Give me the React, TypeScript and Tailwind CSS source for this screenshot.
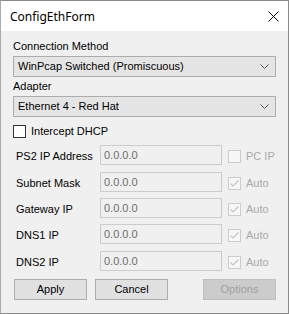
import React from "react";

const font = { fontFamily: '"Liberation Sans", Arial, sans-serif' };

function Combo({ text }: { text: string }) {
  return (
    <div className="h-[21px] w-[263px] border border-[#adadad] bg-[#e5e5e5] flex items-center justify-between pl-[4px] pr-[5px] text-[11px] leading-[13px] text-black">
      <span>{text}</span>
      <svg width="9" height="5" viewBox="0 0 9 5" className="mr-[1px]">
        <path d="M0.5 0.5 L4.5 4.5 L8.5 0.5" fill="none" stroke="#505050" strokeWidth="1" />
      </svg>
    </div>
  );
}

function DisabledCheck({ checked, label }: { checked: boolean; label: string }) {
  return (
    <div className="flex items-center">
      <div className="w-[13px] h-[13px] border border-[#cccccc] bg-[#f7f7f7] flex items-center justify-center">
        {checked && (
          <svg width="11" height="11" viewBox="0 0 11 11">
            <path d="M1.5 5.5 L4 8 L9.5 2.5" fill="none" stroke="#c4c4c4" strokeWidth="1.1" />
          </svg>
        )}
      </div>
      <span className="ml-[5px] text-[#a8a8a8]">{label}</span>
    </div>
  );
}

function Row({ label, check, checked, className }: { label: string; check: string; checked: boolean; className?: string }) {
  return (
    <div className={"flex items-center h-[20px] " + (className || "")}>
      <div className="w-[87px] pl-[3px] pt-[2px]">{label}</div>
      <div className="w-[122px] h-[20px] border border-[#cccccc] bg-[#f0f0f0] flex items-center pl-[3px] text-[#6d6d6d]">
        0.0.0.0
      </div>
      <div className="ml-[6px] pt-[2px]">
        <DisabledCheck checked={checked} label={check} />
      </div>
    </div>
  );
}

function Button({ text, disabled, className }: { text: string; disabled?: boolean; className?: string }) {
  return (
    <div
      className={
        "h-[21px] w-[73px] flex items-center justify-center border " +
        (disabled
          ? "border-[#bfbfbf] bg-[#cccccc] text-[#a0a0a0] "
          : "border-[#adadad] bg-[#e1e1e1] text-black ") +
        (className || "")
      }
    >
      {text}
    </div>
  );
}

export default function App() {
  return (
    <div
      className="w-[289px] h-[314px] border border-[#8a8a8a] border-l-[#aaaaaa] bg-[#f0f0f0] flex flex-col text-[11px] leading-[13px] text-black overflow-hidden"
      style={font}
    >
      <div className="h-[30px] bg-white flex items-center justify-between pl-[9px] pr-[9px] shrink-0">
        <span className="text-[12px] text-black" style={{ fontFamily: '"Noto Sans", "Open Sans", sans-serif' }}>
          ConfigEthForm
        </span>
        <svg width="11" height="11" viewBox="0 0 11 11">
          <path d="M0.5 0.5 L10.5 10.5 M10.5 0.5 L0.5 10.5" stroke="#000" strokeWidth="1" />
        </svg>
      </div>
      <div className="flex flex-col pl-[12px] pt-[9px]">
        <div>Connection Method</div>
        <div className="mt-[3px]">
          <Combo text="WinPcap Switched (Promiscuous)" />
        </div>
        <div className="mt-[3px]">Adapter</div>
        <div className="mt-[3px]">
          <Combo text="Ethernet 4 - Red Hat" />
        </div>
        <div className="flex items-center mt-[8px]">
          <div className="w-[13px] h-[13px] border border-[#333333] bg-white" />
          <span className="ml-[5px]">Intercept DHCP</span>
        </div>
        <div className="flex flex-col mt-[7px]">
          <Row label="PS2 IP Address" check="PC IP" checked={false} />
          <Row label="Subnet Mask" check="Auto" checked={true} className="mt-[7px]" />
          <Row label="Gateway IP" check="Auto" checked={true} className="mt-[6px]" />
          <Row label="DNS1 IP" check="Auto" checked={true} className="mt-[6px]" />
          <Row label="DNS2 IP" check="Auto" checked={true} className="mt-[7px]" />
        </div>
        <div className="flex mt-[8px] pl-[1px]">
          <Button text="Apply" />
          <Button text="Cancel" className="ml-[8px]" />
          <Button text="Options" disabled className="ml-[35px]" />
        </div>
      </div>
    </div>
  );
}
